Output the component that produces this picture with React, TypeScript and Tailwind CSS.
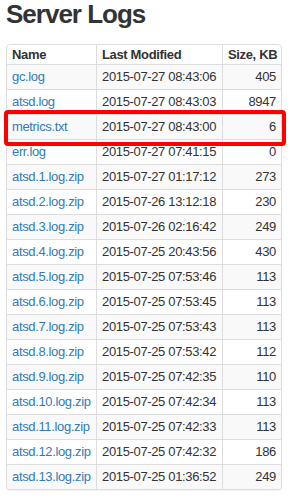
import React from "react";

const rows: [string, string, string][] = [
  ["gc.log", "2015-07-27 08:43:06", "405"],
  ["atsd.log", "2015-07-27 08:43:03", "8947"],
  ["metrics.txt", "2015-07-27 08:43:00", "6"],
  ["err.log", "2015-07-27 07:41:15", "0"],
  ["atsd.1.log.zip", "2015-07-27 01:17:12", "273"],
  ["atsd.2.log.zip", "2015-07-26 13:12:18", "230"],
  ["atsd.3.log.zip", "2015-07-26 02:16:42", "249"],
  ["atsd.4.log.zip", "2015-07-25 20:43:56", "430"],
  ["atsd.5.log.zip", "2015-07-25 07:53:46", "113"],
  ["atsd.6.log.zip", "2015-07-25 07:53:45", "113"],
  ["atsd.7.log.zip", "2015-07-25 07:53:43", "113"],
  ["atsd.8.log.zip", "2015-07-25 07:53:42", "112"],
  ["atsd.9.log.zip", "2015-07-25 07:42:35", "110"],
  ["atsd.10.log.zip", "2015-07-25 07:42:34", "113"],
  ["atsd.11.log.zip", "2015-07-25 07:42:33", "113"],
  ["atsd.12.log.zip", "2015-07-25 07:42:32", "186"],
  ["atsd.13.log.zip", "2015-07-25 01:36:52", "249"],
];

export default function App() {
  return (
    <div
      className="w-[291px] h-[498px] bg-white px-[6px] text-[#333]"
      style={{ fontFamily: '"Liberation Sans", Arial, sans-serif' }}
    >
      <h2 className="h-[30px] text-[26px] leading-[29px] font-bold tracking-[-1px] whitespace-nowrap">
        Server Logs
      </h2>
      <div className="relative mt-[14px] w-[276px]">
        <div className="w-[276px] border border-[#ddd] rounded-[4px] shadow-[0_1px_1px_rgba(0,0,0,0.05)] text-[13px] tracking-[-0.35px]">
          <div className="grid grid-cols-[89px_126px_59px] h-[20px] border-b border-[#ddd] font-bold leading-[19px] rounded-t-[4px] bg-white">
            <div className="px-[5px] whitespace-nowrap">Name</div>
            <div className="px-[5px] border-l border-[#ddd] whitespace-nowrap">Last Modified</div>
            <div className="px-[5px] border-l border-[#ddd] text-right whitespace-nowrap">Size, KB</div>
          </div>
          {rows.map(([name, date, size], i) => (
            <div
              key={name}
              className={`grid grid-cols-[89px_126px_59px] leading-[24px] ${
                i < rows.length - 1 ? "h-[25px] border-b border-[#ddd]" : "h-[24px] rounded-b-[4px]"
              } ${i % 2 === 0 ? "bg-[#f9f9f9]" : "bg-white"}`}
            >
              <div className="px-[5px] whitespace-nowrap text-[#337ab7]">{name}</div>
              <div className="px-[5px] border-l border-[#ddd] whitespace-nowrap">{date}</div>
              <div className="px-[5px] border-l border-[#ddd] text-right whitespace-nowrap">{size}</div>
            </div>
          ))}
        </div>
        <div className="absolute left-[-2px] top-[66px] w-[282px] h-[36px] border-[4px] border-[#f00] rounded-[4px] pointer-events-none" />
      </div>
    </div>
  );
}
